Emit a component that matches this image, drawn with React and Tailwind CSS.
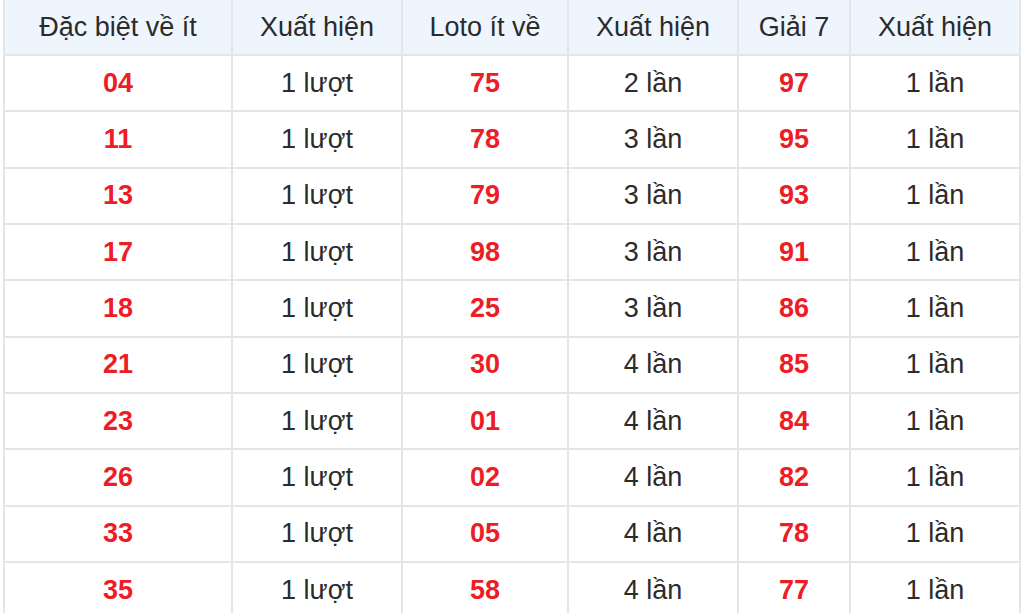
import React from "react";

const rows = [
  ["04", "1 lượt", "75", "2 lần", "97", "1 lần"],
  ["11", "1 lượt", "78", "3 lần", "95", "1 lần"],
  ["13", "1 lượt", "79", "3 lần", "93", "1 lần"],
  ["17", "1 lượt", "98", "3 lần", "91", "1 lần"],
  ["18", "1 lượt", "25", "3 lần", "86", "1 lần"],
  ["21", "1 lượt", "30", "4 lần", "85", "1 lần"],
  ["23", "1 lượt", "01", "4 lần", "84", "1 lần"],
  ["26", "1 lượt", "02", "4 lần", "82", "1 lần"],
  ["33", "1 lượt", "05", "4 lần", "78", "1 lần"],
  ["35", "1 lượt", "58", "4 lần", "77", "1 lần"],
];

const headers = ["Đặc biệt về ít", "Xuất hiện", "Loto ít về", "Xuất hiện", "Giải 7", "Xuất hiện"];
const widths = ["w-[228px]", "w-[170px]", "w-[166px]", "w-[170px]", "w-[112px]", "w-[170px]"];

const App = () => {
  return (
    <div className="h-[613px] overflow-hidden bg-white pl-[3px] pr-[5px]" style={{ fontFamily: '"Liberation Sans", Arial, sans-serif' }}>
      <table className="w-[1016px] table-fixed border-collapse text-[27px] leading-none text-[#2b2b2b]">
        <colgroup>
          {widths.map((w, i) => (
            <col key={i} className={w} />
          ))}
        </colgroup>
        <thead>
          <tr className="h-[55px] bg-[#eef5fd]">
            {headers.map((h, i) => (
              <th key={i} className="border-2 border-t-0 border-[#e2e5ea] text-center font-normal">
                {h}
              </th>
            ))}
          </tr>
        </thead>
        <tbody>
          {rows.map((r, ri) => (
            <tr key={ri} className="h-[56.33px]">
              {r.map((c, ci) => (
                <td
                  key={ci}
                  className={
                    "border-2 border-[#e2e5ea] text-center " +
                    (ci % 2 === 0 ? "font-bold text-[#ee1c25]" : "")
                  }
                >
                  {c}
                </td>
              ))}
            </tr>
          ))}
        </tbody>
      </table>
    </div>
  );
};

export default App;
